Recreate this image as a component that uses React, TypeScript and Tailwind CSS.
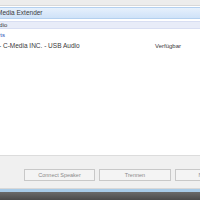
export default function App() {
  return (
    <div className="flex h-[200px] w-[200px] flex-col overflow-hidden bg-[#f0f0f0] font-['Liberation_Sans',Arial,sans-serif] text-[6px] text-[#3a3a3a]">
      <div className="h-[6px] border-b border-[#d8d8d8] bg-[#ececec]" />
      <div className="flex flex-1 flex-col bg-white">
        <div className="mt-[1px] flex h-[12px] items-center border-y border-[#b4d0ef] bg-gradient-to-b from-[#e6f0fc] to-[#cfe2f8] whitespace-nowrap">
          <span className="-ml-[3px] text-[6.5px]">Media Extender</span>
        </div>
        <div className="mt-[2px] flex h-[8px] items-center border-y border-[#d8def2] bg-[#e8ecf8] whitespace-nowrap">
          <span className="-ml-[8px]">Audio</span>
        </div>
        <div className="mt-[2px] flex h-[9px] items-center whitespace-nowrap text-[#2a4fb8]">
          <span className="-ml-[9px]">Ports</span>
        </div>
        <div className="mt-[1px] flex h-[10px] items-center whitespace-nowrap">
          <span className="-ml-[1px] w-[156px] shrink-0 text-[6.5px]">- C-Media INC. - USB Audio</span>
          <span>Verfügbar</span>
        </div>
        <div className="flex-1" />
      </div>
      <div className="flex h-[33px] items-center gap-[4px] border-t border-[#dcdcdc] bg-[#f0f0f0] pl-[24px] pt-[6px]">
        <button className="h-[12px] w-[71px] shrink-0 border border-[#c8c8c8] bg-[#f4f4f4] text-[5.5px] text-[#8a8a8a]">Connect Speaker</button>
        <button className="h-[12px] w-[72px] shrink-0 border border-[#c8c8c8] bg-[#f4f4f4] text-[5.5px] text-[#8a8a8a]">Trennen</button>
        <button className="h-[12px] w-[72px] shrink-0 border border-[#c8c8c8] bg-[#f4f4f4] text-[5.5px] text-[#8a8a8a]">Neu laden</button>
      </div>
      <div className="h-[1px] bg-[#d8d8d8]" />
      <div className="h-[3px] bg-[#a8cbe8]" />
      <div className="h-[8px] bg-gradient-to-b from-[#6a6a6a] to-[#4a4a4a]" />
    </div>
  );
}
